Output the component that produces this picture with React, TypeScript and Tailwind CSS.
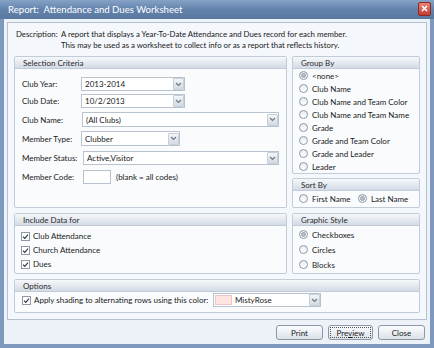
import React from "react";

const FONT = "font-['Lato',sans-serif]";

function Chevron() {
  return (
    <svg width="7" height="5" viewBox="0 0 7 5">
      <path d="M1 1 L3.5 3.5 L6 1" fill="none" stroke="#6d7886" strokeWidth="1.2" />
    </svg>
  );
}

function Combo({ cls, children }: { cls: string; children: React.ReactNode }) {
  return (
    <div className={`h-[14px] flex items-center bg-white border border-[#b9c3cf] pl-[3px] ${cls}`}>
      <div className="flex-1 truncate leading-[12px]">{children}</div>
      <div className="w-[11px] h-[12px] bg-linear-to-b from-[#f4f6f9] to-[#d3dae3] border border-[#c6ced8] rounded-[1px] flex items-center justify-center">
        <Chevron />
      </div>
    </div>
  );
}

function GroupBox({
  title,
  cls,
  children,
}: {
  title: string;
  cls: string;
  children: React.ReactNode;
}) {
  return (
    <div className={`flex flex-col border border-[#c2ccd8] rounded-[2px] bg-[#f9fbfd] ${cls}`}>
      <div className="h-[12px] shrink-0 flex items-center pl-[8px] bg-linear-to-b from-[#f6f8fa] to-[#d4dbe6] border-b border-[#c2ccd8] text-[#2b2b2b] leading-[12px]">
        {title}
      </div>
      {children}
    </div>
  );
}

function Radio({ checked }: { checked?: boolean }) {
  return (
    <div className="w-[9px] h-[9px] rounded-full border border-[#8e99a7] bg-linear-to-b from-[#e6eaef] to-[#ffffff] flex items-center justify-center shrink-0">
      {checked && <div className="w-[5px] h-[5px] rounded-full bg-[#b7bec8] border border-[#9aa3ae]" />}
    </div>
  );
}

function Check() {
  return (
    <div className="w-[9px] h-[9px] border border-[#8e99a7] bg-white flex items-center justify-center shrink-0">
      <svg width="7" height="7" viewBox="0 0 7 7">
        <path d="M1 3.6 L2.8 5.4 L6 1.6" fill="none" stroke="#2d3540" strokeWidth="1.1" />
      </svg>
    </div>
  );
}

function Btn({ children, cls, focus }: { children: React.ReactNode; cls: string; focus?: boolean }) {
  return (
    <div
      className={`h-[15px] ${cls} rounded-[3px] border border-[#8d98a6] bg-linear-to-b from-[#fbfcfd] to-[#dce2ea] flex items-center justify-center p-[1px]`}
    >
      <div
        className={`w-full h-full flex items-center justify-center ${focus ? "border border-dotted border-[#555]" : ""}`}
      >
        {children}
      </div>
    </div>
  );
}

export default function App() {
  const groupItems = [
    "<none>",
    "Club Name",
    "Club Name and Team Color",
    "Club Name and Team Name",
    "Grade",
    "Grade and Team Color",
    "Grade and Leader",
    "Leader",
  ];
  return (
    <div className={`w-[434px] h-[348px] bg-[#7d99bd] flex flex-col text-[8px] text-[#1a1a1a] ${FONT}`}>
      {/* Title bar */}
      <div className="h-[19px] shrink-0 flex items-center justify-between bg-linear-to-b from-[#86a2c6] via-[#6383ad] to-[#58789f] pl-[8px] pr-[3px]">
        <div className="text-white text-[9.6px] leading-[12px]">Report:&nbsp; Attendance and Dues Worksheet</div>
        <div className="w-[13px] h-[14px] mb-[2px] rounded-[2px] border border-[#8e2a22] bg-linear-to-b from-[#e8837a] to-[#c23b30] flex items-center justify-center">
          <svg width="7" height="7" viewBox="0 0 7 7">
            <path d="M1 1 L6 6 M6 1 L1 6" stroke="white" strokeWidth="1.6" />
          </svg>
        </div>
      </div>
      {/* Content */}
      <div className="flex-1 mx-[4px] mb-[4px] bg-[#edf2f8] flex flex-col">
        <div className="mx-[3px] mt-[3px] h-[298px] border border-[#b3c1d3] bg-[#f4f7fb] px-[6px] flex flex-col">
          {/* Description */}
          <div className="flex pt-[6px] pl-[2px] leading-[11px] text-[7.8px]">
            <div className="w-[45px] shrink-0">Description:</div>
            <div>
              <div>A report that displays a Year-To-Date Attendance and Dues record for each member.</div>
              <div>This may be used as a worksheet to collect info or as a report that reflects history.</div>
            </div>
          </div>
          {/* Row 1 */}
          <div className="flex gap-[5px] mt-[5px]">
            <GroupBox title="Selection Criteria" cls="w-[273px] h-[152px]">
              <div className="flex flex-col pl-[7px]">
                <div className="flex items-center h-[14px] mt-[8px]">
                  <div className="w-[59px]">Club Year:</div>
                  <Combo cls="w-[104px]">2013-2014</Combo>
                </div>
                <div className="flex items-center h-[14px] mt-[3px]">
                  <div className="w-[59px]">Club Date:</div>
                  <Combo cls="w-[104px]">10/2/2013</Combo>
                </div>
                <div className="flex items-center h-[15px] mt-[4px]">
                  <div className="w-[60px]">Club Name:</div>
                  <Combo cls="w-[197px] h-[15px]">(All Clubs)</Combo>
                </div>
                <div className="flex items-center h-[15px] mt-[4px]">
                  <div className="w-[59px]">Member Type:</div>
                  <Combo cls="w-[99px] h-[15px]">Clubber</Combo>
                </div>
                <div className="flex items-center h-[14px] mt-[5px]">
                  <div className="w-[61px]">Member Status:</div>
                  <Combo cls="w-[196px]">Active,Visitor</Combo>
                </div>
                <div className="flex items-center h-[14px] mt-[5px]">
                  <div className="w-[61px]">Member Code:</div>
                  <div className="w-[28px] h-[14px] bg-white border border-[#b9c3cf]" />
                  <div className="ml-[5px]">(blank = all codes)</div>
                </div>
              </div>
            </GroupBox>
            <div className="w-[128px] flex flex-col gap-[4px]">
              <GroupBox title="Group By" cls="h-[118px]">
                <div className="flex flex-col pl-[6px]">
                  {groupItems.map((g, i) => (
                    <div key={g} className="flex items-center h-[13px] gap-[4px]">
                      <Radio checked={i === 0} />
                      <span>{g}</span>
                    </div>
                  ))}
                </div>
              </GroupBox>
              <GroupBox title="Sort By" cls="h-[30px]">
                <div className="flex items-center h-[15px] pl-[6px]">
                  <Radio />
                  <span className="ml-[4px] w-[46px]">First Name</span>
                  <Radio checked />
                  <span className="ml-[4px]">Last Name</span>
                </div>
              </GroupBox>
            </div>
          </div>
          {/* Row 2 */}
          <div className="flex gap-[5px] mt-[5px]">
            <GroupBox title="Include Data for" cls="w-[273px] h-[61px]">
              <div className="flex flex-col pl-[6px] pt-[3px]">
                {["Club Attendance", "Church Attendance", "Dues"].map((t) => (
                  <div key={t} className="flex items-center h-[14px] gap-[3px]">
                    <Check />
                    <span>{t}</span>
                  </div>
                ))}
              </div>
            </GroupBox>
            <GroupBox title="Graphic Style" cls="w-[128px] h-[61px]">
              <div className="flex flex-col pl-[6px] pt-[1px]">
                {["Checkboxes", "Circles", "Blocks"].map((t, i) => (
                  <div key={t} className="flex items-center h-[15px] gap-[4px]">
                    <Radio checked={i === 0} />
                    <span>{t}</span>
                  </div>
                ))}
              </div>
            </GroupBox>
          </div>
          {/* Options */}
          <GroupBox title="Options" cls="mt-[5px] h-[34px]">
            <div className="flex items-center h-[14px] mt-[1px] pl-[7px]">
              <Check />
              <span className="ml-[3px] w-[179px]">Apply shading to alternating rows using this color:</span>
              <div className="w-[108px] h-[14px] flex items-center bg-white border border-[#b9c3cf] pl-[1px]">
                <div className="w-[17px] h-[10px] bg-[#ffe4e1] border border-[#e6c9c5]" />
                <div className="flex-1 pl-[3px]">MistyRose</div>
                <div className="w-[11px] h-[12px] bg-linear-to-b from-[#f4f6f9] to-[#d3dae3] border border-[#c6ced8] rounded-[1px] flex items-center justify-center">
                  <Chevron />
                </div>
              </div>
            </div>
          </GroupBox>
        </div>
        {/* Buttons */}
        <div className="flex justify-end gap-[5px] mt-[5px] pr-[5px]">
          <Btn cls="w-[47px]">Print</Btn>
          <Btn cls="w-[45px]" focus>
            <span>
              Pre<span className="underline">v</span>iew
            </span>
          </Btn>
          <Btn cls="w-[47px]">Close</Btn>
        </div>
      </div>
    </div>
  );
}
